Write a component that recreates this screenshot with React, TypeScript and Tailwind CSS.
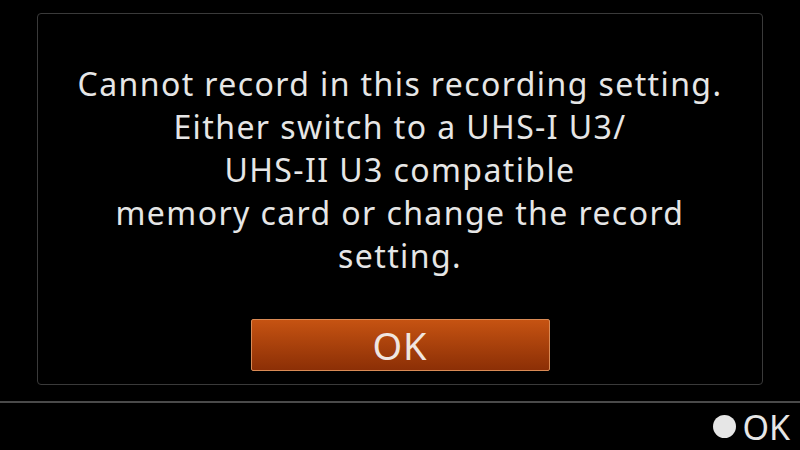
import React from "react";

export default function App() {
  const lines = [
    "Cannot record in this recording setting.",
    "Either switch to a UHS-I U3/",
    "UHS-II U3 compatible",
    "memory card or change the record",
    "setting.",
  ];
  return (
    <div
      className="w-[800px] h-[450px] bg-black flex flex-col overflow-hidden text-[#e6e6e6]"
      style={{ fontFamily: '"Noto Sans", "Open Sans", sans-serif' }}
    >
      <div className="h-[401px] pt-[13px] px-[37px] pb-[16px] flex">
        <div className="flex-1 border border-[#3a3a3a] rounded-[4px] flex flex-col items-center">
          <div className="mt-[48px] flex flex-col items-center text-[32px] leading-[43px] tracking-[1.4px] text-center">
            {lines.map((l) => (
              <div key={l}>{l}</div>
            ))}
          </div>
          <div className="mt-[42px] w-[299px] h-[52px] rounded-[2px] border border-[#d98a55] bg-gradient-to-b from-[#c65312] to-[#8c2f06] flex items-center justify-center text-[38px] leading-none tracking-[1px] text-[#f0e6e0]">
            OK
          </div>
        </div>
      </div>
      <div className="h-[2px] bg-[#4a4a4a]" />
      <div className="flex-1 flex items-center justify-end pr-[10px] gap-[6px]">
        <div className="w-[23px] h-[23px] rounded-full bg-[#e6e6e6]" />
        <div className="text-[34px] leading-none">OK</div>
      </div>
    </div>
  );
}
